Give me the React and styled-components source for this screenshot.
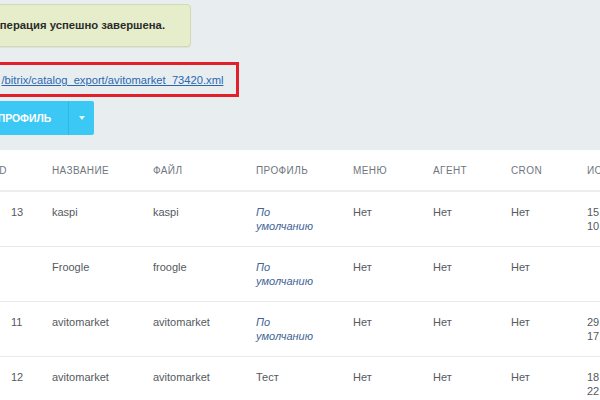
import React from 'react'
import styled, { createGlobalStyle } from 'styled-components'

const GlobalStyle = createGlobalStyle`
    html, body {
        margin: 0;
        padding: 0;
        overflow: hidden;
        background: #e8eef0;
        font-family: "Liberation Sans", Arial, Helvetica, sans-serif;
    }
`

const Page = styled.div`
    width: 600px;
    height: 400px;
    overflow: hidden;
    padding-top: 4px;
    box-sizing: border-box;
    display: flex;
    flex-direction: column;
    align-items: flex-start;

    > * {
        flex-shrink: 0;
    }
`

const OkMessage = styled.div`
    margin-left: -30px;
    height: 43px;
    box-sizing: border-box;
    padding: 0 25px 0 20px;
    line-height: 41px;
    background: #e6edca;
    border: 1px solid #d2dab2;
    border-radius: 4px;
    box-shadow: 0 1px 1px rgba(0, 0, 0, 0.06);
    color: #2b2b2b;
    font-size: 11.3px;
    font-weight: bold;
`

const Highlight = styled.div`
    margin: 15px 0 0 -30px;
    height: 35px;
    box-sizing: border-box;
    padding: 0 12px 0 28.5px;
    border: 3.5px solid #e2202c;
    line-height: 28px;
`

const FileLink = styled.a`
    color: #2a67b1;
    font-size: 11.2px;
    text-decoration: underline;
`

const ButtonGroup = styled.div`
    margin: 4px 0 0 -84px;
    display: flex;
    height: 34px;
    background: #3bc8f5;
    border-radius: 2px;
`

const MainButton = styled.button`
    border: 0;
    background: transparent;
    padding: 0 17px 0 20px;
    color: #fff;
    font-family: inherit;
    font-size: 10.4px;
    font-weight: bold;
    cursor: pointer;
`

const ArrowButton = styled.button`
    width: 26px;
    border: 0;
    border-left: 1px solid rgba(0, 0, 0, 0.09);
    background: transparent;
    display: flex;
    align-items: center;
    justify-content: center;
    padding: 0;
    cursor: pointer;

    &::after {
        content: '';
        border-left: 3.5px solid transparent;
        border-right: 3.5px solid transparent;
        border-top: 4px solid rgba(255, 255, 255, 0.85);
    }
`

const TableWrap = styled.div`
    margin-top: 15px;
    width: 100%;
    background: #fff;
    flex: 1 0 auto;
`

const Grid = styled.table`
    border-collapse: collapse;
    table-layout: fixed;
    width: 657px;
`

const HeadCell = styled.th`
    height: 40px;
    padding: 0;
    text-align: left;
    vertical-align: middle;
    font-size: 10px;
    font-weight: normal;
    letter-spacing: 0.4px;
    text-transform: uppercase;
    color: #6f767e;
    border-bottom: 2px solid #eceef0;
    white-space: nowrap;
    text-indent: ${p => p.$indent || 0}px;
`

const Row = styled.tr`
    border-bottom: 1px solid #e9eaeb;
`

const Cell = styled.td`
    padding: 13px ${p => p.$right || 8}px 13px ${p => p.$left || 0}px;
    vertical-align: top;
    font-size: 11px;
    line-height: 14px;
    font-style: ${p => (p.$italic ? 'italic' : 'normal')};
    color: ${p => (p.$italic ? '#3f6595' : '#555a60')};
`

const columns = [
    { title: 'ID', width: 52, indent: -4 },
    { title: 'Название', width: 101 },
    { title: 'Файл', width: 103 },
    { title: 'Профиль', width: 97 },
    { title: 'Меню', width: 80 },
    { title: 'Агент', width: 78 },
    { title: 'CRON', width: 76 },
    { title: 'Использован', width: 70 }
]

const rows = [
    { id: '13', name: 'kaspi', file: 'kaspi', profile: 'По умолчанию', def: true, used: '15.06.2020 10:32:17' },
    { id: '', name: 'Froogle', file: 'froogle', profile: 'По умолчанию', def: true, used: '' },
    { id: '11', name: 'avitomarket', file: 'avitomarket', profile: 'По умолчанию', def: true, used: '29.05.2020 17:04:51' },
    { id: '12', name: 'avitomarket', file: 'avitomarket', profile: 'Тест', def: false, used: '18.06.2020 22:15:40' }
]

const App = () => {
    return (
        <>
            <GlobalStyle />
            <Page>
                <OkMessage>Операция успешно завершена.</OkMessage>
                <Highlight>
                    <FileLink href="#">/bitrix/catalog_export/avitomarket_73420.xml</FileLink>
                </Highlight>
                <ButtonGroup>
                    <MainButton>ДОБАВИТЬ ПРОФИЛЬ</MainButton>
                    <ArrowButton aria-label="Ещё" />
                </ButtonGroup>
                <TableWrap>
                    <Grid>
                        <colgroup>
                            {columns.map(c => <col key={c.title} style={{ width: c.width }} />)}
                        </colgroup>
                        <thead>
                            <tr>
                                {columns.map(c => (
                                    <HeadCell key={c.title} $indent={c.indent}>{c.title}</HeadCell>
                                ))}
                            </tr>
                        </thead>
                        <tbody>
                            {rows.map((r, i) => (
                                <Row key={i}>
                                    <Cell $left={11}>{r.id}</Cell>
                                    <Cell>{r.name}</Cell>
                                    <Cell>{r.file}</Cell>
                                    <Cell $italic={r.def} $right={35}>{r.profile}</Cell>
                                    <Cell>Нет</Cell>
                                    <Cell>Нет</Cell>
                                    <Cell>Нет</Cell>
                                    <Cell>{r.used}</Cell>
                                </Row>
                            ))}
                        </tbody>
                    </Grid>
                </TableWrap>
            </Page>
        </>
    )
}

export default App
